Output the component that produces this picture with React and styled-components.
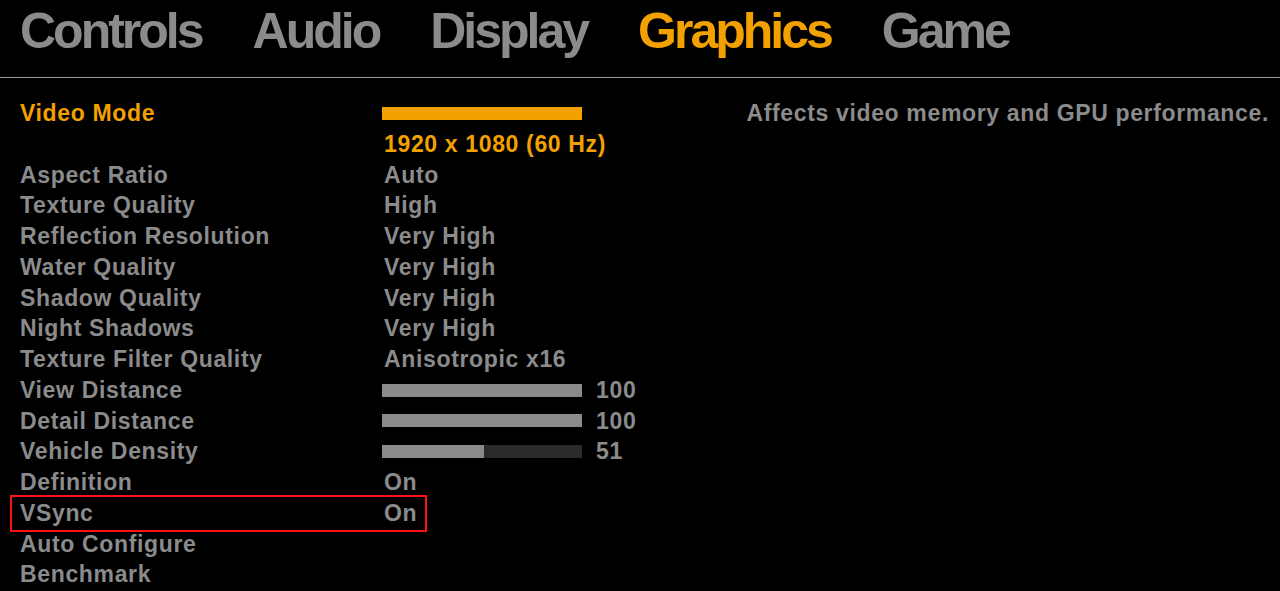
import React from 'react';
import styled, { createGlobalStyle } from 'styled-components';

const Global = createGlobalStyle`
  html, body {
    margin: 0;
    background: #000;
  }
  body {
    font-family: "Liberation Sans", Arial, sans-serif;
    font-weight: bold;
  }
`;

const GRAY = '#8b8b8b';
const ORANGE = '#f2a100';

const Screen = styled.div`
  width: 1280px;
  height: 591px;
  background: #000;
  overflow: hidden;
`;

const TabBar = styled.div`
  display: flex;
  gap: 51px;
  height: 71px;
  padding: 6px 0 0 20px;
  border-bottom: 1px solid #9a9a9a;
`;

const Tab = styled.div`
  font-size: 50px;
  line-height: 50px;
  letter-spacing: -3px;
  color: ${p => (p.$active ? ORANGE : GRAY)};
`;

const Body = styled.div`
  display: flex;
  justify-content: space-between;
  padding: 20px 11px 0 20px;
  letter-spacing: 0.65px;
`;

const List = styled.div`
  display: flex;
  flex-direction: column;
`;

const Row = styled.div`
  position: relative;
  display: grid;
  grid-template-columns: 362px auto;
  align-items: center;
  height: 30.75px;
  font-size: 23px;
  line-height: 30.75px;
  color: ${p => (p.$active ? ORANGE : GRAY)};

  ${p =>
    p.$boxed &&
    `
    &::after {
      content: '';
      position: absolute;
      left: -10px;
      top: -3px;
      width: 413px;
      height: 33px;
      border: 2px solid #ff1010;
    }
  `}
`;

const Value = styled.div`
  display: flex;
  align-items: center;
  gap: 14px;
  padding-left: 2px;
`;

const Track = styled.div`
  width: 200px;
  height: 13px;
  margin-left: -2px;
  background: ${p => (p.$color === 'orange' ? ORANGE : '#2a2a2a')};
`;

const Fill = styled.div`
  height: 100%;
  background: ${GRAY};
`;

const Hint = styled.div`
  font-size: 23px;
  line-height: 30.75px;
  color: ${GRAY};
`;

const tabs = ['Controls', 'Audio', 'Display', 'Graphics', 'Game'];

const rows = [
  { label: 'Aspect Ratio', value: 'Auto' },
  { label: 'Texture Quality', value: 'High' },
  { label: 'Reflection Resolution', value: 'Very High' },
  { label: 'Water Quality', value: 'Very High' },
  { label: 'Shadow Quality', value: 'Very High' },
  { label: 'Night Shadows', value: 'Very High' },
  { label: 'Texture Filter Quality', value: 'Anisotropic x16' },
  { label: 'View Distance', slider: 100 },
  { label: 'Detail Distance', slider: 100 },
  { label: 'Vehicle Density', slider: 51 },
  { label: 'Definition', value: 'On' },
  { label: 'VSync', value: 'On', boxed: true },
  { label: 'Auto Configure' },
  { label: 'Benchmark' },
];

function Slider({ amount }) {
  return (
    <Value>
      <Track>
        <Fill style={{ width: `${amount}%` }} />
      </Track>
      <span>{amount}</span>
    </Value>
  );
}

export default function App() {
  return (
    <Screen>
      <Global />
      <TabBar>
        {tabs.map(t => (
          <Tab key={t} $active={t === 'Graphics'}>
            {t}
          </Tab>
        ))}
      </TabBar>
      <Body>
        <List>
          <Row $active>
            <span>Video Mode</span>
            <Value>
              <Track $color="orange" />
            </Value>
          </Row>
          <Row $active>
            <span />
            <Value>1920 x 1080 (60 Hz)</Value>
          </Row>
          {rows.map(r => (
            <Row key={r.label} $boxed={r.boxed}>
              <span>{r.label}</span>
              {r.slider !== undefined ? (
                <Slider amount={r.slider} />
              ) : (
                <Value>{r.value}</Value>
              )}
            </Row>
          ))}
        </List>
        <Hint>Affects video memory and GPU performance.</Hint>
      </Body>
    </Screen>
  );
}
